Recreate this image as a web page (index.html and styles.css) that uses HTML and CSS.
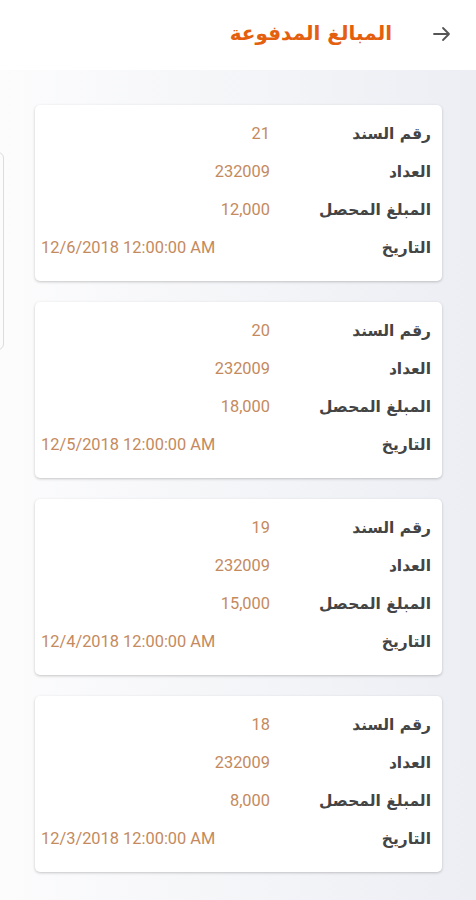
FILE: index.html
```html
<!DOCTYPE html>
<html lang="ar" dir="rtl">
<head>
  <meta charset="UTF-8" />
  <meta name="viewport" content="width=device-width, initial-scale=1.0"/>
  <title>المبالغ المدفوعة</title>
  <link rel="stylesheet" href="styles.css">
</head>
<body>

  <header class="topbar">
    <svg class="back" width="20" height="16" viewBox="0 0 20 16">
      <path d="M2 8 H17 M11 2 L17 8 L11 14" fill="none" stroke="#555" stroke-width="1.8" stroke-linecap="round" stroke-linejoin="round"/>
    </svg>
    <h1>المبالغ المدفوعة</h1>
  </header>

  <div class="drawer-edge"></div>

  <main class="list">
    <div class="card">
      <div class="row"><span class="label">رقم السند</span><span class="value" dir="ltr">21</span></div>
      <div class="row"><span class="label">العداد</span><span class="value" dir="ltr">232009</span></div>
      <div class="row"><span class="label">المبلغ المحصل</span><span class="value" dir="ltr">12,000</span></div>
      <div class="row"><span class="label">التاريخ</span><span class="value date" dir="ltr">12/6/2018 12:00:00 AM</span></div>
    </div>
    <div class="card">
      <div class="row"><span class="label">رقم السند</span><span class="value" dir="ltr">20</span></div>
      <div class="row"><span class="label">العداد</span><span class="value" dir="ltr">232009</span></div>
      <div class="row"><span class="label">المبلغ المحصل</span><span class="value" dir="ltr">18,000</span></div>
      <div class="row"><span class="label">التاريخ</span><span class="value date" dir="ltr">12/5/2018 12:00:00 AM</span></div>
    </div>
    <div class="card">
      <div class="row"><span class="label">رقم السند</span><span class="value" dir="ltr">19</span></div>
      <div class="row"><span class="label">العداد</span><span class="value" dir="ltr">232009</span></div>
      <div class="row"><span class="label">المبلغ المحصل</span><span class="value" dir="ltr">15,000</span></div>
      <div class="row"><span class="label">التاريخ</span><span class="value date" dir="ltr">12/4/2018 12:00:00 AM</span></div>
    </div>
    <div class="card">
      <div class="row"><span class="label">رقم السند</span><span class="value" dir="ltr">18</span></div>
      <div class="row"><span class="label">العداد</span><span class="value" dir="ltr">232009</span></div>
      <div class="row"><span class="label">المبلغ المحصل</span><span class="value" dir="ltr">8,000</span></div>
      <div class="row"><span class="label">التاريخ</span><span class="value date" dir="ltr">12/3/2018 12:00:00 AM</span></div>
    </div>
  </main>

</body>
</html>
```

FILE: styles.css
```css
html, body {
  margin: 0;
  padding: 0;
}
body {
  font-family: "DejaVu Sans", "Noto Sans", sans-serif;
  background: linear-gradient(to right, #fcfcfd 0%, #f3f4f7 60%, #eceef4 100%);
  min-height: 900px;
  position: relative;
  overflow: hidden;
}
.topbar {
  height: 70px;
  background: #fff;
  display: flex;
  align-items: center;
  padding-right: 24px;
  gap: 40px;
  box-sizing: border-box;
}
.back {
  margin-top: -2px;
}
.topbar h1 {
  margin: 0 0 4px 0;
  font-size: 20px;
  font-weight: bold;
  color: #e4600e;
}
.drawer-edge {
  position: absolute;
  left: -12px;
  top: 152px;
  width: 14px;
  height: 196px;
  border: 1px solid #dcdcdc;
  border-radius: 6px;
}
.list {
  display: flex;
  flex-direction: column;
  gap: 21px;
  padding: 35px 34px 0 35px;
}
.card {
  background: #fff;
  border-radius: 5px;
  box-shadow: 0 1px 3px rgba(0,0,0,0.22);
  padding: 10px 11px 14px 6px;
  height: 176px;
  box-sizing: border-box;
}
.row {
  display: grid;
  grid-template-columns: 161px 1fr;
  align-items: center;
  height: 38px;
}
.label {
  font-size: 15.5px;
  font-weight: bold;
  color: #444;
  text-align: right;
}
.value {
  font-family: Roboto, "Liberation Sans", sans-serif;
  font-size: 16.4px;
  color: #c48a5e;
  text-align: right;
  margin-top: -2px;
}
.value.date {
  text-align: left;
}
```
